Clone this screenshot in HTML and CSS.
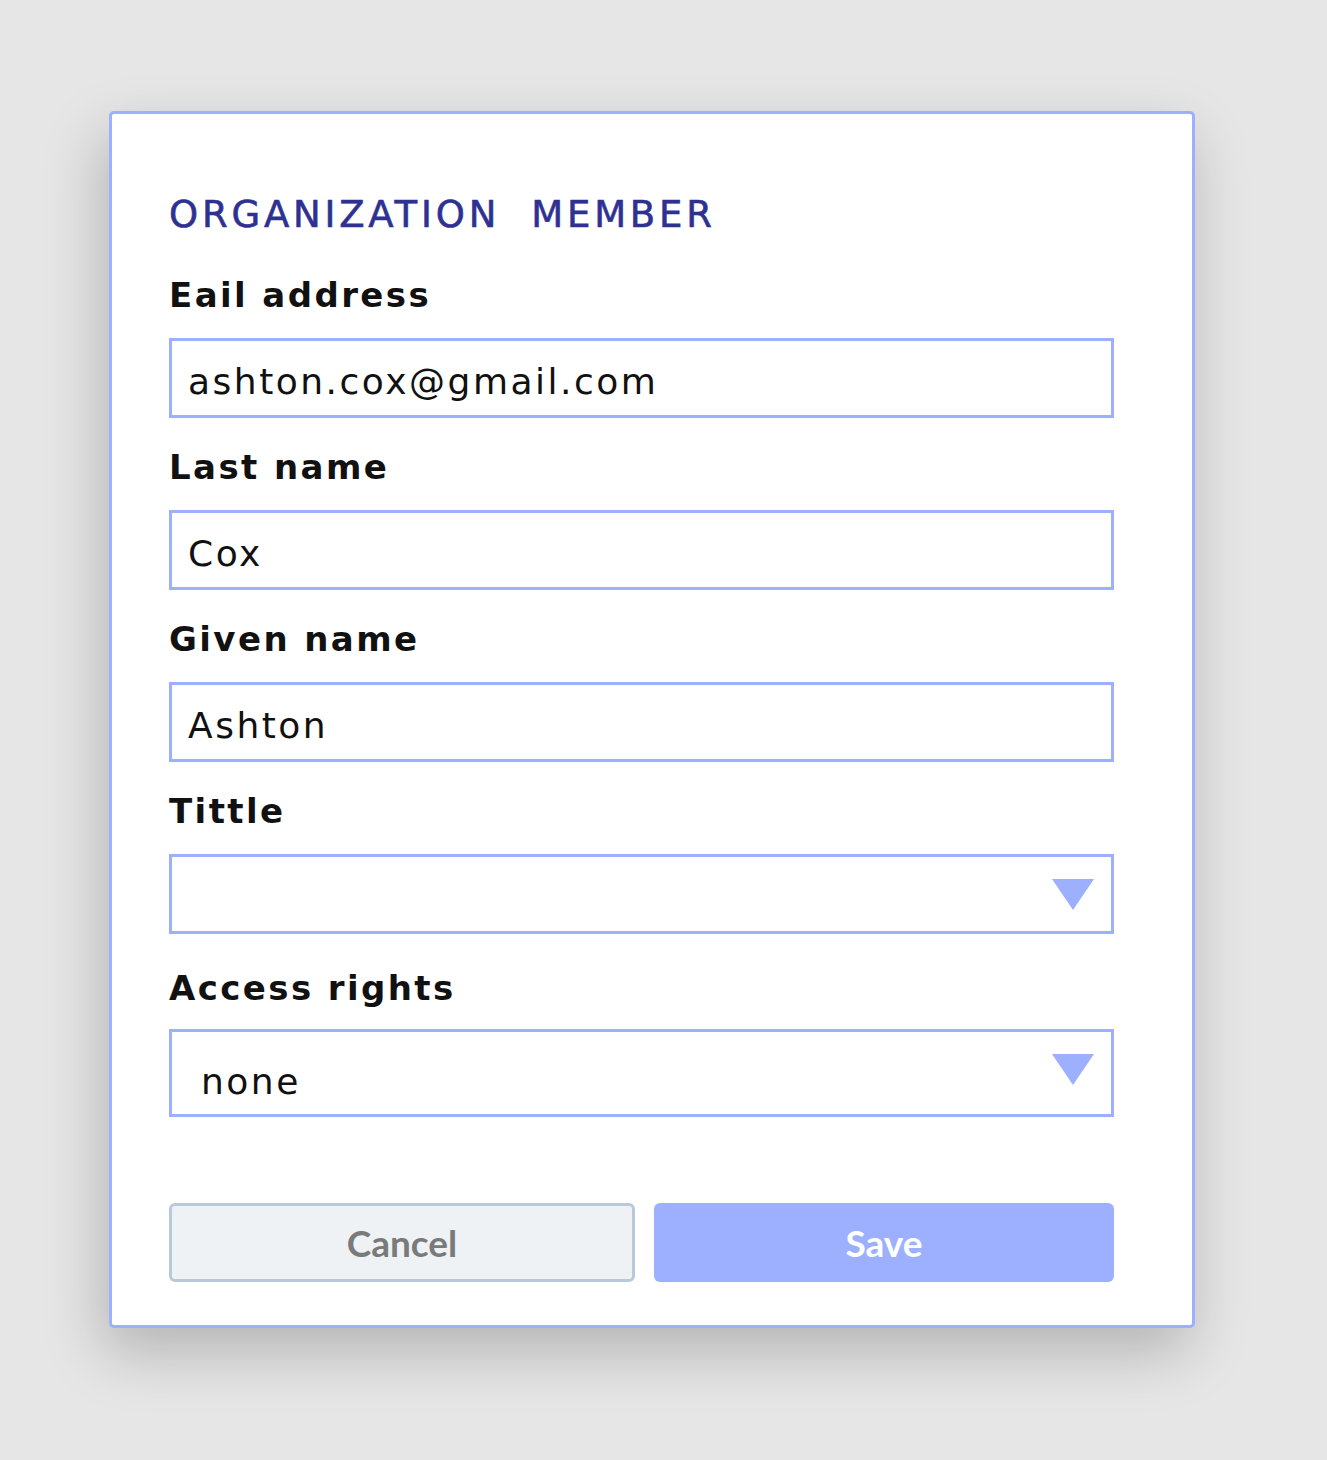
FILE: index.html
```html
<!DOCTYPE html>
<html lang="en">
<head>
    <meta charset="UTF-8">
    <meta name="viewport" content="width=device-width, initial-scale=1.0">
    <title>Organization member</title>
    <link rel="stylesheet" href="styles.css">
</head>
<body>
    <div class="card">
        <h1 class="title">ORGANIZATION&nbsp; MEMBER</h1>

        <!-- Email -->
        <div class="field">
            <label class="label">Eail address</label>
            <div class="input">ashton.cox@gmail.com</div>
        </div>

        <!-- Last name -->
        <div class="field">
            <label class="label">Last name</label>
            <div class="input">Cox</div>
        </div>

        <!-- Given name -->
        <div class="field">
            <label class="label">Given name</label>
            <div class="input">Ashton</div>
        </div>

        <!-- Title -->
        <div class="field">
            <label class="label">Tittle</label>
            <div class="input select">
                <span></span>
                <svg class="arrow" width="42" height="31" viewBox="0 0 42 31"><polygon points="0,0 42,0 21,31" fill="#9db0ff"/></svg>
            </div>
        </div>

        <!-- Access rights -->
        <div class="field access">
            <label class="label">Access rights</label>
            <div class="input select tall">
                <span>none</span>
                <svg class="arrow" width="42" height="31" viewBox="0 0 42 31"><polygon points="0,0 42,0 21,31" fill="#9db0ff"/></svg>
            </div>
        </div>

        <div class="actions">
            <button class="btn cancel">Cancel</button>
            <button class="btn save">Save</button>
        </div>
    </div>
</body>
</html>
```

FILE: styles.css
```css
/* Page */
body {
    margin: 0;
    min-height: 100vh;
    box-sizing: border-box;
    padding: 111px 0 0 109px;
    background-color: #e6e6e6;
    font-family: "DejaVu Sans", sans-serif;
}
/* Card */
.card {
    width: 1086px;
    box-sizing: border-box;
    padding: 76px 78px 43px 57px;
    background-color: #fff;
    border: 3px solid #9db0ff;
    border-radius: 5px;
    box-shadow: -6px 24px 60px rgba(0, 0, 0, 0.22);
}
/* Title */
.title {
    margin: 0;
    font-size: 37px;
    line-height: 50px;
    font-weight: normal;
    letter-spacing: 3.8px;
    color: #2e3192;
    -webkit-text-stroke: 0.6px #2e3192;
}
/* Fields */
.field {
    margin-top: 32px;
}
.field + .field {
    margin-top: 26px;
}
.field.access {
    margin-top: 31px;
}
.label {
    display: block;
    font-size: 34px;
    line-height: 46px;
    font-weight: 600;
    letter-spacing: 2.4px;
    color: #111;
    margin-bottom: 20px;
}
.access .label {
    margin-bottom: 18px;
}
.input {
    height: 80px;
    box-sizing: border-box;
    border: 3px solid #9db0ff;
    padding: 6px 16px 0;
    display: flex;
    align-items: center;
    font-size: 36px;
    letter-spacing: 2.5px;
    color: #111;
}
.select {
    justify-content: space-between;
    padding-top: 0;
    padding-right: 17px;
}
.arrow {
    align-self: flex-start;
    margin-top: 22px;
}
.tall {
    height: 88px;
    padding-left: 29px;
}
.tall span {
    margin-top: 16px;
}
/* Buttons */
.actions {
    display: flex;
    gap: 19px;
    margin-top: 86px;
}
.btn {
    flex: 1;
    height: 79px;
    font-family: Lato, sans-serif;
    font-weight: bold;
    font-size: 37px;
    border-radius: 6px;
    cursor: pointer;
}
.cancel {
    background-color: #eff2f5;
    border: 3px solid #b9c9da;
    color: #7a7a7a;
}
.save {
    background-color: #9db0ff;
    border: none;
    color: #fff;
}
```
